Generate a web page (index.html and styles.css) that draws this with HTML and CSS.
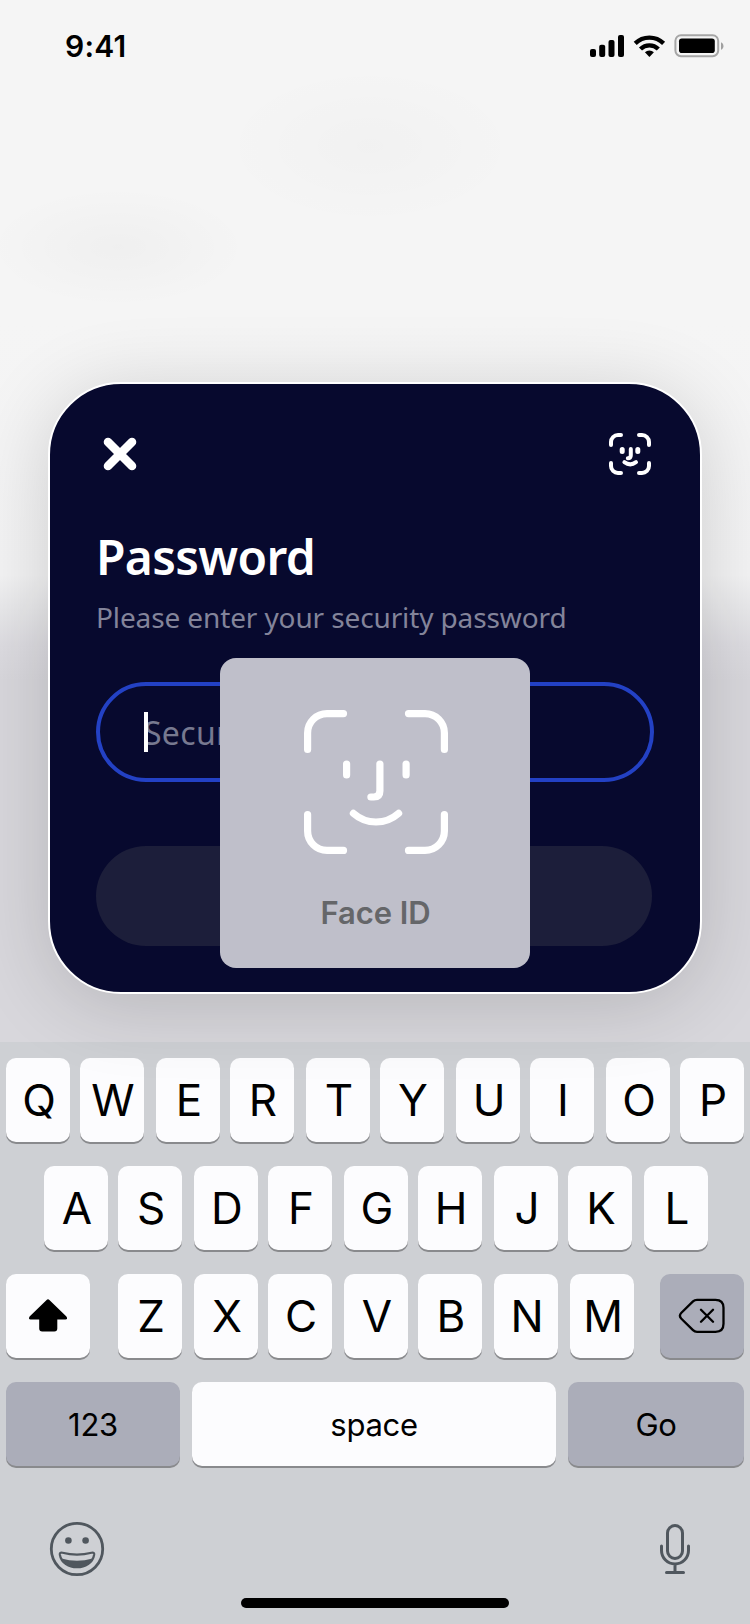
FILE: index.html
```html
<!DOCTYPE html>
<html lang="en">
<head>
<meta charset="utf-8">
<title>Password</title>
<link rel="stylesheet" href="styles.css">
</head>
<body>
<div class="screen">
  <header class="status">
    <span class="time">9:41</span>
    <svg class="status-icons" width="136" height="26" viewBox="589 33 136 26">
      <rect x="590" y="49" width="6" height="8" rx="2"/><rect x="599.2" y="44.7" width="6" height="12.3" rx="2"/><rect x="608.5" y="40" width="6" height="17" rx="2"/><rect x="618" y="35" width="6" height="22" rx="2"/>
      <g fill="none" stroke="#000" stroke-width="4.3"><path d="M635.2 43.4a20.2 20.2 0 0 1 28.4 0"/><path d="M640.5 49a12.6 12.6 0 0 1 17.8 0"/></g>
      <path d="M644.9 52.3a6.6 6.6 0 0 1 9 0L649.4 56.9z"/>
      <rect x="675.4" y="35.2" width="42.8" height="21" rx="5.6" fill="none" stroke="#a6a6a6" stroke-width="2"/>
      <rect x="679" y="38.5" width="35.8" height="14.6" rx="2.8"/>
      <path d="M721 42.2c3.3 1.3 3.3 6.3 0 7.6z" fill="#a0a0a0"/>
    </svg>
  </header>
  <main class="stage">
    <section class="card">
      <div class="card-bar">
        <svg class="close" width="48" height="48" viewBox="96 430 48 48"><path d="M108 442l24 24M132 442l-24 24"/></svg>
        <svg class="face-small" width="48" height="48" viewBox="606 430 48 48"><path d="M611 445v-3a7 7 0 0 1 7-7h3M639 435h3a7 7 0 0 1 7 7v3M649 463v3a7 7 0 0 1-7 7h-3M621 473h-3a7 7 0 0 1-7-7v-3"/><path d="M622.2 449.5v2M637.8 449.5v2" stroke-width="5"/><path d="M630.8 449v6.2q0 3-3 3M624.4 462.2q5.8 4.4 11.600 0"/></svg>
      </div>
      <h1 class="title">Password</h1>
      <p class="hint">Please enter your security password</p>
      <div class="field"><span class="caret"></span><span class="placeholder">Security password</span></div>
      <div class="submit"></div>
      <div class="face-panel">
        <svg class="face-large" width="150" height="150" viewBox="301 707 150 150"><path d="M307.6 749.5V733a19.4 19.4 0 0 1 19.4-19.4h16.5M408.500 713.6H425a19.4 19.4 0 0 1 19.4 19.4v16.5M444.4 814.5V831a19.4 19.4 0 0 1-19.4 19.4h-16.5M343.5 850.4H327a19.4 19.4 0 0 1-19.4-19.4v-16.5M346.6 764v11M406.1 764v11M379.9 764v27q0 6-6 6h-3M353.4 813.4a34 34 0 0 0 45.2 0"/></svg>
        <span class="face-label">Face ID</span>
      </div>
    </section>
  </main>
  <section class="keyboard">
    <div class="row"><span class="key">Q</span><span class="key">W</span><span class="key">E</span><span class="key">R</span><span class="key">T</span><span class="key">Y</span><span class="key">U</span><span class="key">I</span><span class="key">O</span><span class="key">P</span></div>
    <div class="row row-home"><span class="key">A</span><span class="key">S</span><span class="key">D</span><span class="key">F</span><span class="key">G</span><span class="key">H</span><span class="key">J</span><span class="key">K</span><span class="key">L</span></div>
    <div class="row row-split">
      <span class="key wide"><svg width="42" height="36" viewBox="27 1297.5 42 36"><path d="M46.6 1299.4q1.4-1.4 2.8 0l17 16.6q1.8 3-1 3H57.300v9q0 3-3 3H42.200q-3 0-3-3v-9H30.600q-2.600 0-1-3z"/></svg></span>
      <div class="row"><span class="key">Z</span><span class="key">X</span><span class="key">C</span><span class="key">V</span><span class="key">B</span><span class="key">N</span><span class="key last">M</span></div>
      <span class="key wide dark"><svg class="outline" width="50" height="38" viewBox="677 1297.500 50 38"><path d="M697 1300.300h18.500q8 0 8 8v16q0 8-8 8H697q-2.300 0-4-1.700l-11.600-11.400q-3-3 0-6l11.600-11.300q1.700-1.600 4-1.600zM701 1310.300l12 12M713 1310.300l-12 12"/></svg></span>
    </div>
    <div class="row row-bottom"><span class="key label dark num">123</span><span class="key label space">space</span><span class="key label dark go">Go</span></div>
    <div class="tools">
      <svg width="56" height="56" viewBox="49 1521 56 56"><circle cx="77" cy="1549" r="25.700" fill="none" stroke="#50575e" stroke-width="2.800"/><circle cx="68.400" cy="1540.500" r="3.300"/><circle cx="85.600" cy="1540.500" r="3.300"/><path d="M62.500 1552.800Q77 1556.500 91.500 1552.800Q94.500 1552 94.200 1554.500C91.500 1571.500 62.500 1571.500 59.800 1554.500Q59.500 1552 62.500 1552.800z" fill="none" stroke="#50575e" stroke-width="2.200"/><path d="M61.500 1558.500Q77 1563 92.500 1558.500C87 1571 67 1571 61.500 1558.500z"/></svg>
      <svg class="mic" width="34" height="54" viewBox="658 1522 34 54"><rect x="667.500" y="1525.500" width="15" height="33" rx="7.500"/><path d="M661.500 1546v4.500a13.500 13.500 0 0 0 27 0V1546M675 1564v8M666.500 1572.400h17"/></svg>
    </div>
    <div class="home"></div>
  </section>
</div>
</body>
</html>
```
FILE: styles.css
```css
* { box-sizing: border-box; }
body { margin: 0; font-family: Inter, "Liberation Sans", sans-serif; }
svg { display: block; flex: none; }
.screen {
  width: 750px; height: 1624px; overflow: hidden; display: flex; flex-direction: column;
  background:
    radial-gradient(ellipse 130px 60px at 118px 247px, rgba(0,0,0,.025), transparent),
    radial-gradient(ellipse 150px 80px at 370px 146px, rgba(0,0,0,.015), transparent),
    linear-gradient(#f5f5f5 0, #f5f5f5 320px, #f3f3f4 575px, #e8e8ea 610px, #dddce1 645px, #d8d7dc 680px, #d8d7dc 100%);
}
.status { height: 92px; padding: 0 25px 0 65px; display: flex; align-items: center; justify-content: space-between; }
.time { font-size: 30px; font-weight: 600; line-height: 36px; letter-spacing: .2px; }
.stage { height: 950px; padding: 290px 48px 0; flex: none; }
.card {
  position: relative; height: 612px; padding: 46px 46px 0; border: 2px solid #fff; border-radius: 73px;
  background: #07092e; box-shadow: 0 10px 80px rgba(0,0,0,.16); color: #fff;
}
.card-bar { display: flex; justify-content: space-between; }
.card-bar svg { fill: none; stroke: #fff; stroke-linecap: round; stroke-width: 4; }
.card-bar .close { stroke-width: 8.6; }
.title { margin: 45px 0 0; font: 650 48px/68px "Noto Sans", sans-serif; letter-spacing: -.65px; }
.hint { margin: 6px 0 0; font: 400 28px/40px "Noto Sans", sans-serif; letter-spacing: -.12px; color: #83849a; white-space: nowrap; }
.field { width: 558px; height: 100px; margin-top: 45px; padding: 0 44px; display: flex; align-items: center; border: 4px solid #2341c4; border-radius: 50px; }
.caret { width: 4px; height: 40px; background: #fff; z-index: 1; flex: none; }
.placeholder { margin-left: -4px; font: 400 32px/40px "Noto Sans", sans-serif; letter-spacing: .3px; color: #777990; white-space: nowrap; padding-top: 1px; }
.submit { width: 556px; height: 100px; margin-top: 64px; border-radius: 50px; background: #1c1e3a; }
.face-panel {
  position: absolute; left: 170px; top: 274px; width: 310px; height: 310px; border-radius: 16px; z-index: 2;
  background: #bfbfca; padding-top: 49px; display: flex; flex-direction: column; align-items: center;
}
.face-large { fill: none; stroke: #fff; stroke-width: 7.2; stroke-linecap: round; margin-left: 2px; }
.face-label { margin: 37px 0 0 1px; font-size: 31px; line-height: 38px; font-weight: 600; letter-spacing: -.1px; color: #656669; }
.keyboard { height: 582px; flex: none; background: #ced0d4; padding: 16px 6px 0; }
.row { display: flex; height: 84px; }
.keyboard > .row { margin-bottom: 24px; }
.row-home { padding-left: 38px; }
.row-split { justify-content: space-between; }
.row-split .row { margin-left: 2px; }
.key {
  width: 64px; height: 84px; flex: none; display: flex; align-items: center; justify-content: center; padding-left: 2px;
  background: #fcfcfe; border-radius: 10px; box-shadow: 0 2px 0 #898a8d; font-size: 44px; color: #000;
}
.key + .key { margin-left: 12px; }
.key + .key:nth-child(even) { margin-left: 10px; }
.row-split .row .key:nth-child(even) { margin-left: 12px; }
.row-split .row .key:nth-child(odd) { margin-left: 10px; }
.row-split .row .key:first-child { margin-left: 0; }
.row-split .row .key.last { margin-left: 12px; }
.key.wide { width: 84px; padding: 0; }
.key.dark { background: #abadb9; }
.key.label { font-size: 31px; padding: 0; letter-spacing: -.3px; }
.outline { fill: none; stroke: #000; stroke-width: 2.3; stroke-linecap: round; }
.row-bottom { justify-content: space-between; }
.row-bottom .key.key { margin-left: 0; }
.num { width: 174px; }
.space { width: 364px; }
.go { width: 176px; }
.tools { display: flex; justify-content: space-between; padding: 31px 52px 0 43px; fill: #50575e; }
.mic { fill: none; stroke: #50575e; stroke-width: 3; stroke-linecap: round; margin-top: 1px; }
.home { width: 268px; height: 10px; margin: 21px 0 0 235px; border-radius: 5px; background: #000; }
```
